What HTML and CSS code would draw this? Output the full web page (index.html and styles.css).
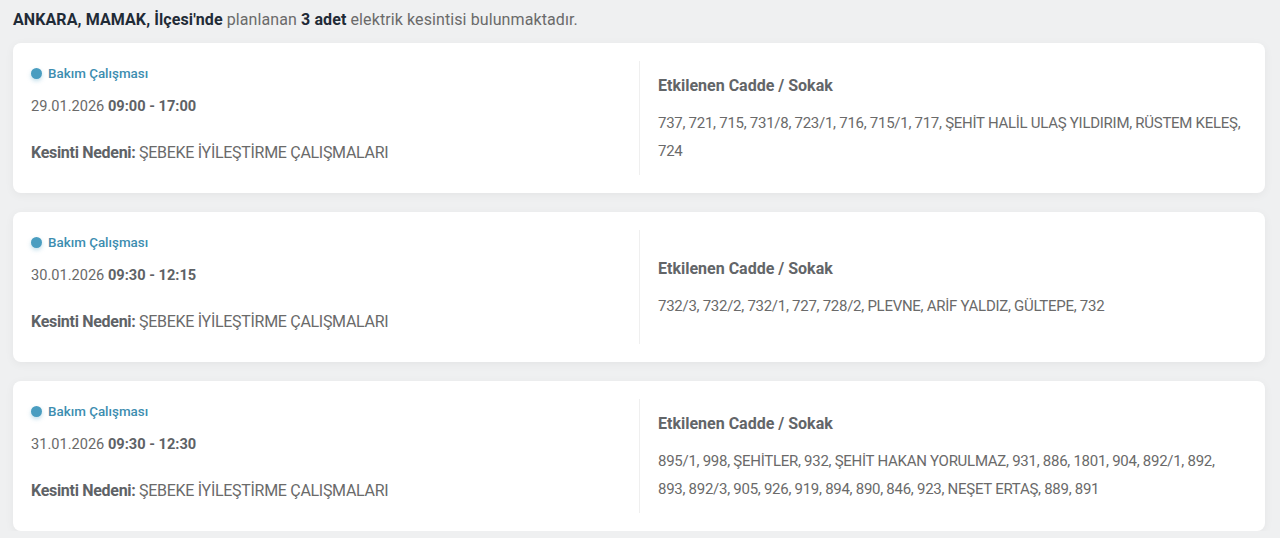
FILE: index.html
```html
<!DOCTYPE html>
<html lang="tr">
<head>
<meta charset="utf-8">
<title>Kesintiler</title>
<link rel="stylesheet" href="styles.css">
</head>
<body>
<main class="page">
  <p class="summary"><b>ANKARA, MAMAK, İlçesi'nde</b> planlanan <b>3 adet</b> elektrik kesintisi bulunmaktadır.</p>

  <section class="card">
    <div class="info">
      <div class="badge"><span class="dot"></span>Bakım Çalışması</div>
      <div class="date">29.01.2026 <b>09:00 - 17:00</b></div>
      <div class="reason"><b>Kesinti Nedeni:</b> ŞEBEKE İYİLEŞTİRME ÇALIŞMALARI</div>
    </div>
    <div class="streets">
      <h3>Etkilenen Cadde / Sokak</h3>
      <p>737, 721, 715, 731/8, 723/1, 716, 715/1, 717, ŞEHİT HALİL ULAŞ YILDIRIM, RÜSTEM KELEŞ, 724</p>
    </div>
  </section>

  <section class="card">
    <div class="info">
      <div class="badge"><span class="dot"></span>Bakım Çalışması</div>
      <div class="date">30.01.2026 <b>09:30 - 12:15</b></div>
      <div class="reason"><b>Kesinti Nedeni:</b> ŞEBEKE İYİLEŞTİRME ÇALIŞMALARI</div>
    </div>
    <div class="streets">
      <h3>Etkilenen Cadde / Sokak</h3>
      <p>732/3, 732/2, 732/1, 727, 728/2, PLEVNE, ARİF YALDIZ, GÜLTEPE, 732</p>
    </div>
  </section>

  <section class="card">
    <div class="info">
      <div class="badge"><span class="dot"></span>Bakım Çalışması</div>
      <div class="date">31.01.2026 <b>09:30 - 12:30</b></div>
      <div class="reason"><b>Kesinti Nedeni:</b> ŞEBEKE İYİLEŞTİRME ÇALIŞMALARI</div>
    </div>
    <div class="streets">
      <h3>Etkilenen Cadde / Sokak</h3>
      <p>895/1, 998, ŞEHİTLER, 932, ŞEHİT HAKAN YORULMAZ, 931, 886, 1801, 904, 892/1, 892, 893, 892/3, 905, 926, 919, 894, 890, 846, 923, NEŞET ERTAŞ, 889, 891</p>
    </div>
  </section>
</main>
</body>
</html>
```

FILE: styles.css
```css
* { box-sizing: border-box; }

html, body {
  margin: 0;
  padding: 0;
  background: #eff0f1;
  font-family: Roboto, "Liberation Sans", sans-serif;
  color: #6a6a6a;
}

.page {
  padding: 8px 15px 0 13px;
  display: flex;
  flex-direction: column;
  gap: 19px;
}

.summary {
  margin: 0 0 -8px;
  font-size: 16px;
  line-height: 24px;
  color: #6a6a6a;
  letter-spacing: 0.1px;
}

.summary b {
  color: #1f2b37;
  font-weight: 700;
}

.card {
  background: #ffffff;
  border-radius: 8px;
  box-shadow: 0 2px 10px rgba(0, 0, 0, 0.05);
  display: grid;
  grid-template-columns: 1fr 1fr;
  height: 150px;
}

.info {
  padding: 20px 18px 0;
  display: flex;
  flex-direction: column;
}

.badge {
  display: flex;
  align-items: center;
  gap: 6px;
  height: 20px;
  font-size: 13.4px;
  color: #3d8db0;
  font-weight: 500;
}

.dot {
  width: 11px;
  height: 11px;
  border-radius: 50%;
  background: #4a9dc0;
  box-shadow: 0 2px 4px rgba(74, 157, 192, 0.35);
}

.date {
  margin-top: 13px;
  line-height: 20px;
  font-size: 14.6px;
  color: #6a6a6a;
}

.date b, .reason b {
  color: #5e6266;
  font-weight: 700;
}

.reason {
  margin-top: 27px;
  line-height: 20px;
  font-size: 16px;
  letter-spacing: -0.3px;
}

.streets {
  margin: 18px 0;
  border-left: 1px solid #efefef;
  padding: 0 20px 0 18px;
  display: flex;
  flex-direction: column;
  justify-content: center;
}

.streets h3 {
  margin: 0;
  font-size: 16px;
  line-height: 28px;
  font-weight: 700;
  color: #626568;
}

.streets p {
  margin: 9px 0 0;
  font-size: 15px;
  line-height: 28px;
  color: #6a6a6a;
  letter-spacing: -0.27px;
}
```
